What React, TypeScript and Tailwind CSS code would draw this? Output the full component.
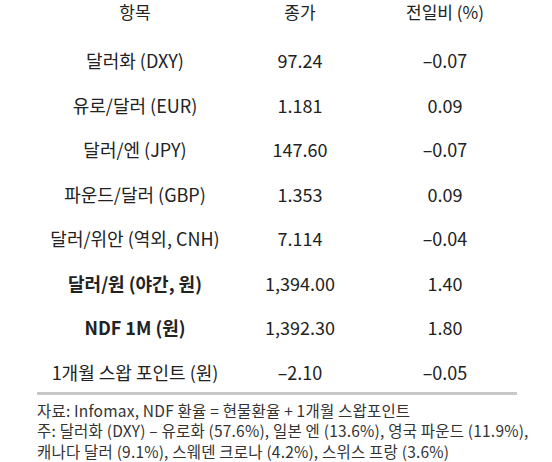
import React from "react";

type Row = { name: string; close: string; diff: string; bold?: boolean };

const rows: Row[] = [
  { name: "달러화 (DXY)", close: "97.24", diff: "–0.07" },
  { name: "유로/달러 (EUR)", close: "1.181", diff: "0.09" },
  { name: "달러/엔 (JPY)", close: "147.60", diff: "–0.07" },
  { name: "파운드/달러 (GBP)", close: "1.353", diff: "0.09" },
  { name: "달러/위안 (역외, CNH)", close: "7.114", diff: "–0.04" },
  { name: "달러/원 (야간, 원)", close: "1,394.00", diff: "1.40", bold: true },
  { name: "NDF 1M (원)", close: "1,392.30", diff: "1.80", bold: true },
  { name: "1개월 스왑 포인트 (원)", close: "–2.10", diff: "–0.05" },
];

const font = {
  fontFamily: '"Noto Sans CJK KR", "Noto Sans", sans-serif',
};

export default function App() {
  return (
    <div
      className="w-[552px] h-[462px] bg-white text-[#222] overflow-hidden"
      style={font}
    >
      <div className="pl-[35px]">
        <div className="flex h-[39px] items-start text-[17px] leading-[24px]">
          <div className="w-[200px] flex justify-center whitespace-nowrap">항목</div>
          <div className="w-[130px] flex justify-center whitespace-nowrap">종가</div>
          <div className="w-[160px] flex justify-center whitespace-nowrap">전일비 (%)</div>
        </div>
        {rows.map((r, i) => (
          <div
            key={i}
            className={`flex items-start pt-[10px] text-[18px] leading-[22px] ${
              i === rows.length - 1 ? "h-[41px]" : "h-[44.5px]"
            }`}
          >
            <div
              className={`w-[200px] flex justify-center whitespace-nowrap ${
                r.bold ? "font-bold" : ""
              }`}
            >
              {r.name}
            </div>
            <div className="w-[130px] flex justify-center whitespace-nowrap">{r.close}</div>
            <div className="w-[160px] flex justify-center whitespace-nowrap">{r.diff}</div>
          </div>
        ))}
      </div>
      <div className="ml-[37px] w-[480px] h-[3px] bg-[#c8c8c8]" />
      <div className="pl-[37px] pt-[5px] text-[15.5px] leading-[20.5px] text-[#333] whitespace-nowrap tracking-[0.2px]">
        <div>자료: Infomax, NDF 환율 = 현물환율 + 1개월 스왑포인트</div>
        <div>주: 달러화 (DXY) – 유로화 (57.6%), 일본 엔 (13.6%), 영국 파운드 (11.9%),</div>
        <div>캐나다 달러 (9.1%), 스웨덴 크로나 (4.2%), 스위스 프랑 (3.6%)</div>
      </div>
    </div>
  );
}
